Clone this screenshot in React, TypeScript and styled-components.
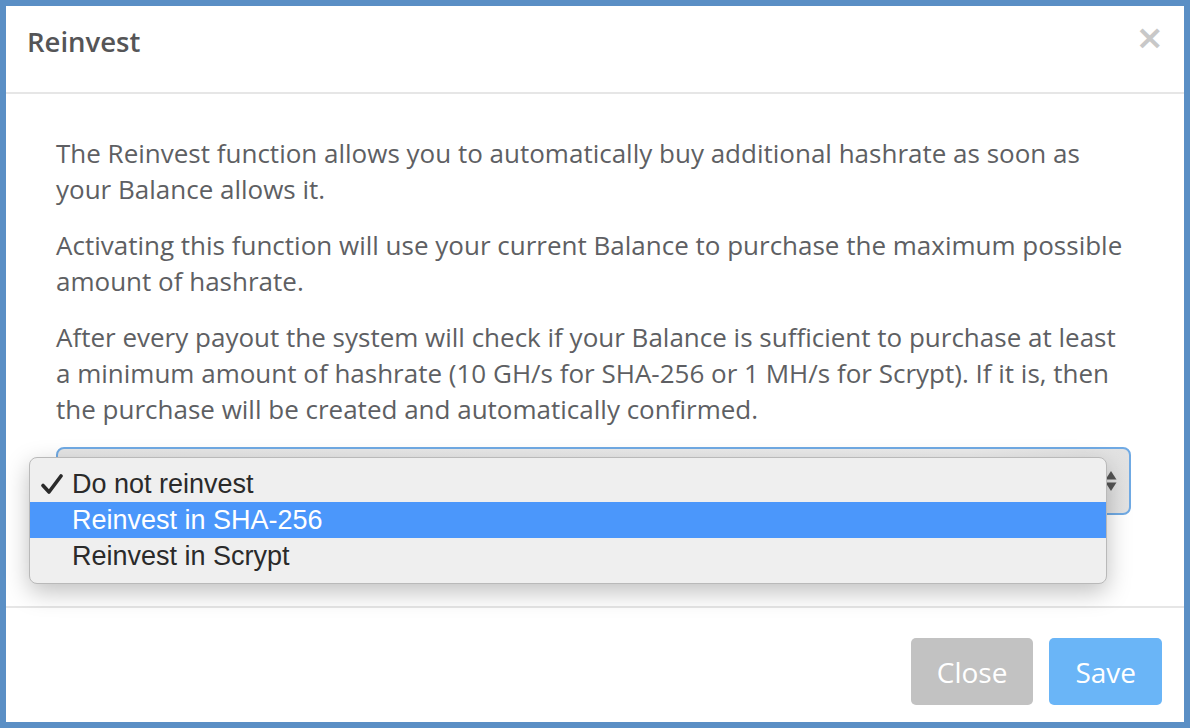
import React from 'react'
import styled, { createGlobalStyle } from 'styled-components'

const GlobalStyle = createGlobalStyle`
  html, body {
    margin: 0;
    padding: 0;
    background: #5a8fc5;
  }
  body {
    font-family: 'Open Sans', 'Liberation Sans', sans-serif;
  }
`

const options = ['Do not reinvest', 'Reinvest in SHA-256', 'Reinvest in Scrypt']

export default function App () {
  const selected = 0
  const highlighted = 1

  return (
    <>
      <GlobalStyle />
      <Frame>
        <Modal>
          <Header>
            <Title>Reinvest</Title>
            <CloseX aria-label='close'>×</CloseX>
          </Header>
          <Body>
            <Paragraph>
              The Reinvest function allows you to automatically buy additional hashrate as soon as your Balance allows it.
            </Paragraph>
            <Paragraph>
              Activating this function will use your current Balance to purchase the maximum possible amount of hashrate.
            </Paragraph>
            <Paragraph>
              After every payout the system will check if your Balance is sufficient to purchase at least a minimum amount of hashrate (10 GH/s for SHA-256 or 1 MH/s for Scrypt). If it is, then the purchase will be created and automatically confirmed.
            </Paragraph>
            <SelectBox>
              <Arrows>
                <svg width='12' height='24' viewBox='0 0 12 24'>
                  <path d='M6 2 L11.5 10.5 H0.5 Z' fill='#555' />
                  <path d='M6 22 L11.5 13.5 H0.5 Z' fill='#555' />
                </svg>
              </Arrows>
              <Menu>
                {options.map((label, i) => (
                  <MenuItem key={label} active={i === highlighted}>
                    <Check>
                      {i === selected && (
                        <svg width='22' height='22' viewBox='0 0 22 22'>
                          <path d='M2 12.5 L8 19 L20 3' fill='none' stroke='#2a2a2a' strokeWidth='3.6' strokeLinecap='round' strokeLinejoin='round' />
                        </svg>
                      )}
                    </Check>
                    {label}
                  </MenuItem>
                ))}
              </Menu>
            </SelectBox>
          </Body>
          <Footer>
            <Button variant='close'>Close</Button>
            <Button variant='save'>Save</Button>
          </Footer>
        </Modal>
      </Frame>
    </>
  )
}

const Frame = styled.div`
  width: 1190px;
  height: 728px;
  padding: 6px;
  box-sizing: border-box;
`

const Modal = styled.div`
  background: #fff;
  height: 100%;
  display: flex;
  flex-direction: column;
`

const Header = styled.div`
  height: 86px;
  padding: 0 20px 0 21px;
  display: flex;
  align-items: center;
  justify-content: space-between;
  border-bottom: 2px solid #e6e6e6;
  flex-shrink: 0;
`

const Title = styled.h4`
  margin: 0;
  font-size: 27.5px;
  font-weight: 600;
  color: #555557;
  padding-bottom: 16px;
`

const CloseX = styled.span`
  font-family: 'DejaVu Sans', sans-serif;
  font-size: 34px;
  font-weight: bold;
  color: #c8c8c8;
  line-height: 1;
  margin-bottom: 24px;
`

const Body = styled.div`
  flex: 1;
  padding: 41px 53px 0 50px;
  border-bottom: 2px solid #e6e6e6;
`

const Paragraph = styled.p`
  margin: 0 0 20px;
  font-size: 26px;
  line-height: 36px;
  color: #5e5f63;
`

const SelectBox = styled.div`
  position: relative;
  height: 64px;
  border: 2px solid #70aae4;
  border-radius: 8px;
  background: linear-gradient(to right, #e6e6e6 0%, #ececec 85%, #e2e2e2 100%);
  display: flex;
  justify-content: flex-end;
  align-items: center;
`

const Arrows = styled.div`
  width: 28px;
  display: flex;
  justify-content: center;
  padding-right: 4px;
`

const Menu = styled.div`
  position: absolute;
  left: -29px;
  top: 8px;
  width: 1078px;
  box-sizing: border-box;
  padding: 8px 0 9px;
  background: #efefef;
  border: 1px solid #b9b9b9;
  border-radius: 8px;
  box-shadow: 0 8px 24px rgba(0, 0, 0, 0.25);
  font-family: 'Liberation Sans', Arial, sans-serif;
`

const MenuItem = styled.div<{ active?: boolean }>`
  height: 36px;
  display: flex;
  align-items: center;
  font-size: 27px;
  color: ${p => (p.active ? '#fff' : '#2a2a2a')};
  background: ${p => (p.active ? '#4b97fb' : 'transparent')};
`

const Check = styled.span`
  width: 42px;
  padding-left: 11px;
  box-sizing: border-box;
  display: flex;
  align-items: center;
`

const Footer = styled.div`
  height: 114px;
  padding: 30px 22px 0 0;
  box-sizing: border-box;
  display: flex;
  align-items: flex-start;
  justify-content: flex-end;
  gap: 16px;
  flex-shrink: 0;
`

const Button = styled.button<{ variant: 'close' | 'save' }>`
  height: 67px;
  padding: 0 26px;
  border: none;
  border-radius: 5px;
  font-family: 'Open Sans', sans-serif;
  font-size: 28px;
  color: #fff;
  background: ${p => (p.variant === 'close' ? '#c2c2c2' : '#6ab5f7')};
`
